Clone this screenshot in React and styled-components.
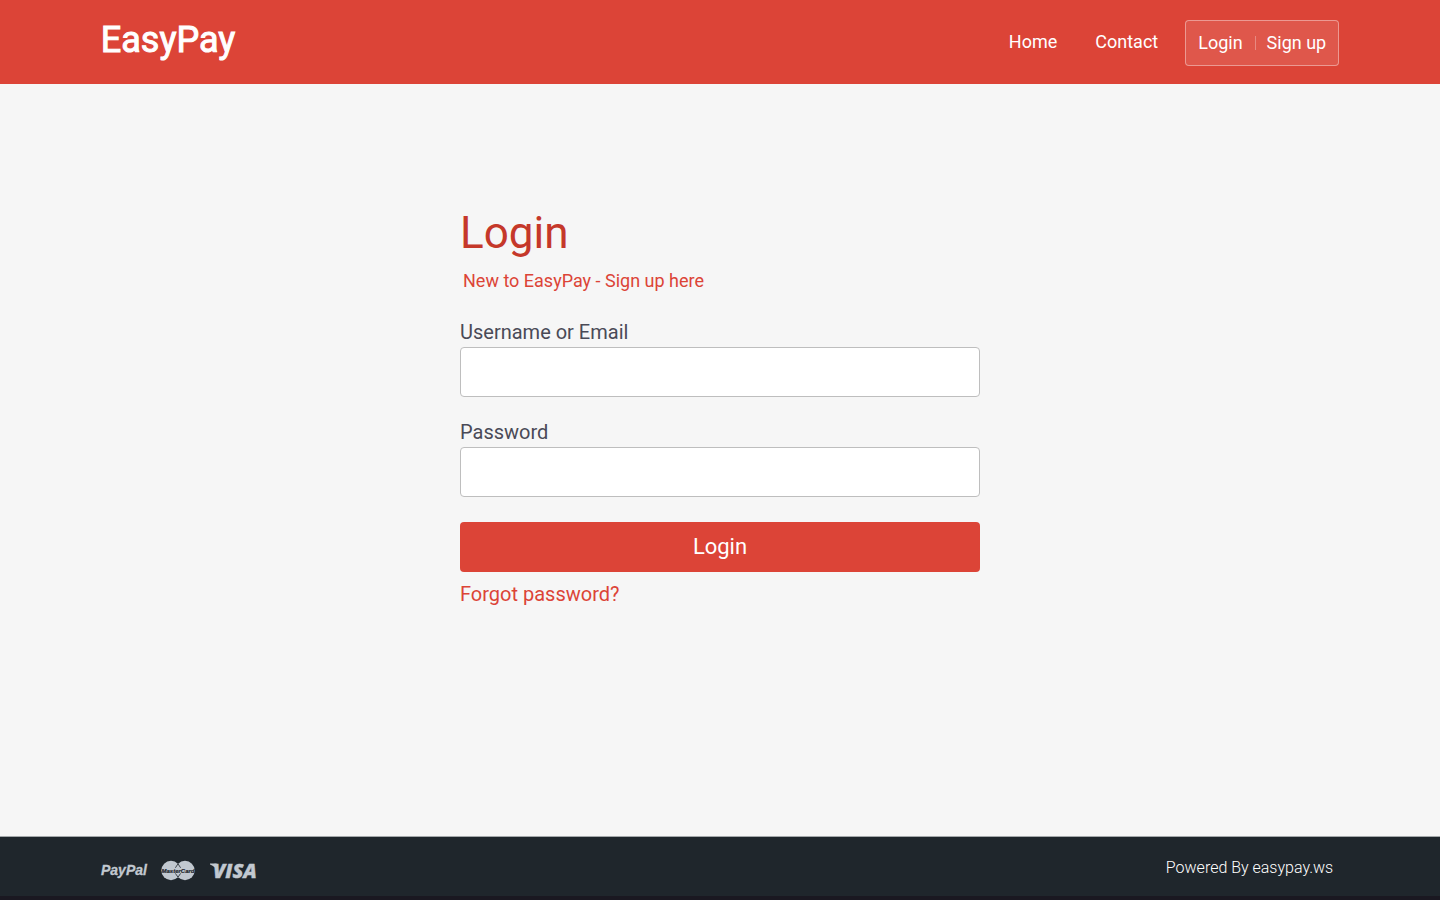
import React from "react";
import styled, { createGlobalStyle } from "styled-components";

const GlobalStyle = createGlobalStyle`
  * { box-sizing: border-box; }
  html { background: #1a1821; }
  body {
    margin: 0;
    font-family: Roboto, "Liberation Sans", sans-serif;
    color: #4a4a57;
  }
`;

const Page = styled.div`
  min-height: 100vh;
  padding-bottom: 4px;
  display: flex;
  flex-direction: column;
`;

const Header = styled.header`
  display: flex;
  justify-content: space-between;
  align-items: flex-start;
  padding: 20px 7% 18px;
  background: #dc4437;
`;

const Brand = styled.a`
  font-size: 36px;
  line-height: 40px;
  font-weight: 400;
  -webkit-text-stroke: 1px #fff;
  color: #fff;
  text-decoration: none;
`;

const Nav = styled.nav`
  display: flex;
  align-items: flex-start;
`;

const NavLink = styled.a`
  margin-right: ${(p) => p.$gap}px;
  font-size: 18px;
  line-height: 44px;
  color: #fff;
  text-decoration: none;
`;

const Account = styled.div`
  display: flex;
  align-items: center;
  height: 46px;
  padding: 0 12px;
  border: 1px solid rgba(255, 255, 255, 0.4);
  border-radius: 4px;
  background: rgba(255, 255, 255, 0.1);
`;

const AccountLink = styled.a`
  font-size: 18px;
  line-height: 44px;
  color: #fff;
  text-decoration: none;

  & + & {
    display: flex;
    align-items: center;
  }

  & + &::before {
    content: "";
    width: 1px;
    height: 14px;
    margin: 0 11px 0 12px;
    background: rgba(255, 255, 255, 0.3);
  }
`;

const Main = styled.main`
  flex: 1;
  padding: 124px 20px 80px;
  background: #f6f6f6;
`;

const Form = styled.form`
  display: flex;
  flex-direction: column;
  width: 100%;
  max-width: 520px;
  margin: 0 auto;
`;

const Title = styled.h1`
  margin: 0;
  font-size: 44px;
  line-height: 51px;
  font-weight: 400;
  color: #c5382a;
`;

const SignUpLink = styled.a`
  align-self: flex-start;
  margin: 11px 0 30px;
  padding-left: 3px;
  font-size: 18px;
  line-height: 22px;
  color: #dc4437;
  text-decoration: none;
`;

const Field = styled.div`
  display: flex;
  flex-direction: column;
  margin-bottom: 25px;
`;

const Label = styled.label`
  margin-bottom: 5px;
  font-size: 20px;
  line-height: 20px;
`;

const Input = styled.input`
  width: 100%;
  height: 50px;
  padding: 0 12px;
  border: 1px solid #bebebe;
  border-radius: 4px;
  background: #fff;
  font: inherit;
  font-size: 20px;
`;

const Submit = styled.button`
  height: 50px;
  padding: 0 0 2px;
  border: 0;
  border-radius: 4px;
  background: #dc4437;
  color: #fff;
  font: inherit;
  font-size: 22px;
`;

const ForgotLink = styled.a`
  align-self: flex-start;
  margin-top: 11px;
  font-size: 20px;
  line-height: 23px;
  color: #dc4437;
  text-decoration: none;
`;

const Footer = styled.footer`
  display: flex;
  justify-content: space-between;
  align-items: center;
  height: 60px;
  padding: 0 7%;
  border-top: 1px solid #a4a8aa;
  background: #1f262c;
`;

const Cards = styled.div`
  display: flex;
  align-items: center;
  gap: 14px;
  padding-top: 8px;

  svg {
    display: block;
    overflow: visible;
    fill: #c1c8d0;
  }
`;

const Powered = styled.p`
  margin: 0;
  padding: 2px 6px 0 0;
  font-size: 16px;
  line-height: 20px;
  font-weight: 300;
  color: #fff;
`;

const PayPal = () => (
  <svg width="46" height="20" viewBox="0 0 46 20" role="img" aria-label="PayPal">
    <text x="0" y="14" fontFamily="Liberation Sans, sans-serif" fontSize="14" fontWeight="700" fontStyle="italic" stroke="#c1c8d0" strokeWidth="0.3">PayPal</text>
  </svg>
);

const MasterCard = () => (
  <svg width="34" height="20" viewBox="0 0 34 20" role="img" aria-label="MasterCard">
    <circle cx="10" cy="9.5" r="9.7" />
    <circle cx="24" cy="9.5" r="9.7" />
    <path d="M17 2.8 L14.4 6.8 M17 2.8 L19.6 6.8 M17 16.2 L14.4 12.4 M17 16.2 L19.6 12.4" stroke="#1f262c" strokeWidth="0.8" fill="none" />
    <text x="17" y="11.5" textAnchor="middle" fontFamily="Liberation Sans, sans-serif" fontSize="6" fontWeight="700" fontStyle="italic" stroke="#1f262c" strokeWidth="0.2" style={{ fill: "#1f262c" }}>MasterCard</text>
  </svg>
);

const Visa = () => (
  <svg width="46" height="20" viewBox="0 0 46 20" role="img" aria-label="VISA">
    <path d="M1 2.4 H7.6 L9.5 11 Q6.5 5.4 1 3.4Z" />
    <text x="4" y="16.5" fontFamily="Open Sans, sans-serif" fontSize="20" fontWeight="800" fontStyle="italic" stroke="#c1c8d0" strokeWidth="0.4">VISA</text>
  </svg>
);

export default function App() {
  return (
    <>
      <GlobalStyle />
      <Page>
        <Header>
          <Brand href="#">EasyPay</Brand>
          <Nav>
            <NavLink href="#" $gap={38}>Home</NavLink>
            <NavLink href="#" $gap={27}>Contact</NavLink>
            <Account>
              <AccountLink href="#">Login</AccountLink>
              <AccountLink href="#">Sign up</AccountLink>
            </Account>
          </Nav>
        </Header>
        <Main>
          <Form onSubmit={(e) => e.preventDefault()}>
            <Title>Login</Title>
            <SignUpLink href="#">New to EasyPay - Sign up here</SignUpLink>
            <Field>
              <Label htmlFor="username">Username or Email</Label>
              <Input id="username" type="text" />
            </Field>
            <Field>
              <Label htmlFor="password">Password</Label>
              <Input id="password" type="password" />
            </Field>
            <Submit type="submit">Login</Submit>
            <ForgotLink href="#">Forgot password?</ForgotLink>
          </Form>
        </Main>
        <Footer>
          <Cards>
            <PayPal />
            <MasterCard />
            <Visa />
          </Cards>
          <Powered>Powered By easypay.ws</Powered>
        </Footer>
      </Page>
    </>
  );
}
